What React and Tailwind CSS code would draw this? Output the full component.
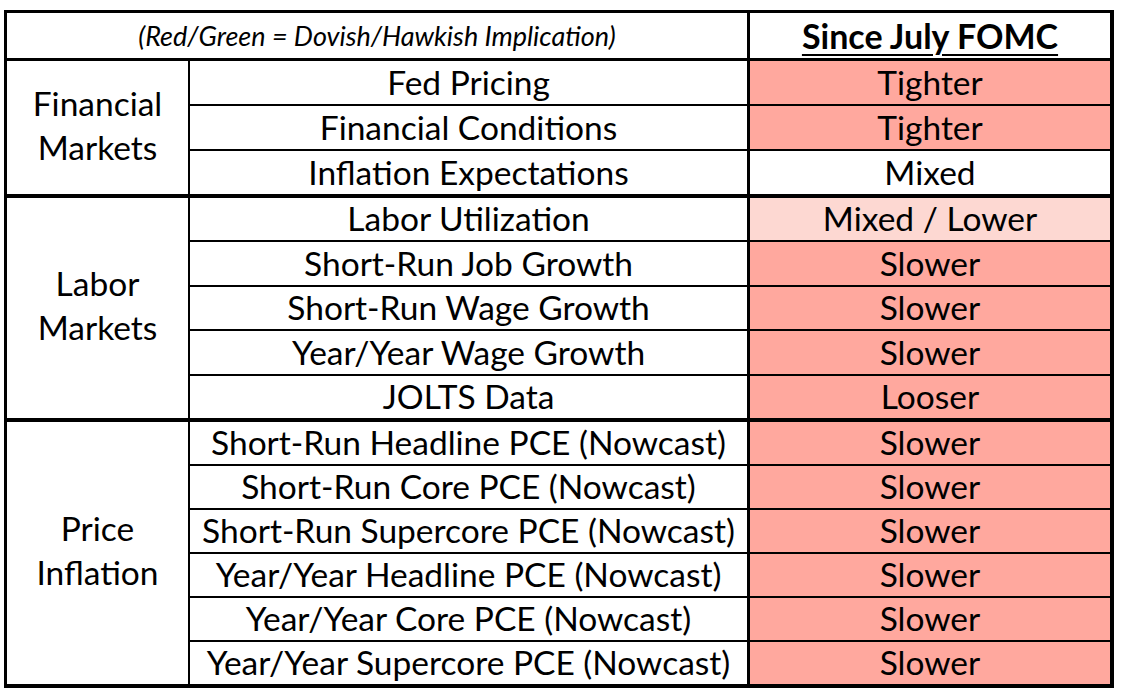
const RED = "bg-[#ffa89e]";
const LIGHT = "bg-[#fdd8d2]";

const groups = [
    {
        label: ["Financial", "Markets"],
        h: "h-[137px]",
        rows: [
            { name: "Fed Pricing", value: "Tighter", bg: RED },
            { name: "Financial Conditions", value: "Tighter", bg: RED },
            { name: "Inflation Expectations", value: "Mixed", bg: "bg-white" },
        ],
    },
    {
        label: ["Labor", "Markets"],
        h: "h-[224px]",
        rows: [
            { name: "Labor Utilization", value: "Mixed / Lower", bg: LIGHT },
            { name: "Short-Run Job Growth", value: "Slower", bg: RED },
            { name: "Short-Run Wage Growth", value: "Slower", bg: RED },
            { name: "Year/Year Wage Growth", value: "Slower", bg: RED },
            { name: "JOLTS Data", value: "Looser", bg: RED },
        ],
    },
    {
        label: ["Price", "Inflation"],
        h: "h-[262px]",
        rows: [
            { name: "Short-Run Headline PCE (Nowcast)", value: "Slower", bg: RED },
            { name: "Short-Run Core PCE (Nowcast)", value: "Slower", bg: RED },
            { name: "Short-Run Supercore PCE (Nowcast)", value: "Slower", bg: RED },
            { name: "Year/Year Headline PCE (Nowcast)", value: "Slower", bg: RED },
            { name: "Year/Year Core PCE (Nowcast)", value: "Slower", bg: RED },
            { name: "Year/Year Supercore PCE (Nowcast)", value: "Slower", bg: RED },
        ],
    },
];

const Group = ({ group, last }) => (
    <div className={`flex ${group.h} border-black ${last ? "" : "border-b-4"}`}>
        <div className="w-[183px] flex flex-col items-center justify-center pb-[6px] border-r-2 border-black leading-[44px]">
            {group.label.map((l) => (
                <span key={l}>{l}</span>
            ))}
        </div>
        <div className="flex-1 flex flex-col min-h-0">
            {group.rows.map((r, i) => (
                <div
                    key={r.name}
                    className={`flex-1 min-h-0 flex leading-none border-black ${i < group.rows.length - 1 ? "border-b-2" : ""}`}
                >
                    <div className="w-[560px] flex items-center justify-center border-r-[3px] border-black whitespace-nowrap">
                        {r.name}
                    </div>
                    <div className={`flex-1 flex items-center justify-center ${r.bg}`}>{r.value}</div>
                </div>
            ))}
        </div>
    </div>
);

export default function App() {
    return (
        <div className="w-[1126px] h-[698px] bg-white pt-[10px] pl-[4px] text-black font-['Lato',sans-serif] text-[33.5px]">
            <div className="w-[1110px] border-black border-t-[3px] border-l-[3px] border-r-4 border-b-4">
                <div className="flex h-[48px] border-b-[3px] border-black leading-none">
                    <div className="w-[743px] flex items-center justify-center border-r-[3px] border-black italic text-[27px]">
                        (Red/Green = Dovish/Hawkish Implication)
                    </div>
                    <div className="flex-1 flex items-center justify-center font-bold text-[34px] underline underline-offset-[5px] decoration-2">
                        Since July FOMC
                    </div>
                </div>
                {groups.map((g, i) => (
                    <Group key={g.label[0]} group={g} last={i === groups.length - 1} />
                ))}
            </div>
        </div>
    );
}
